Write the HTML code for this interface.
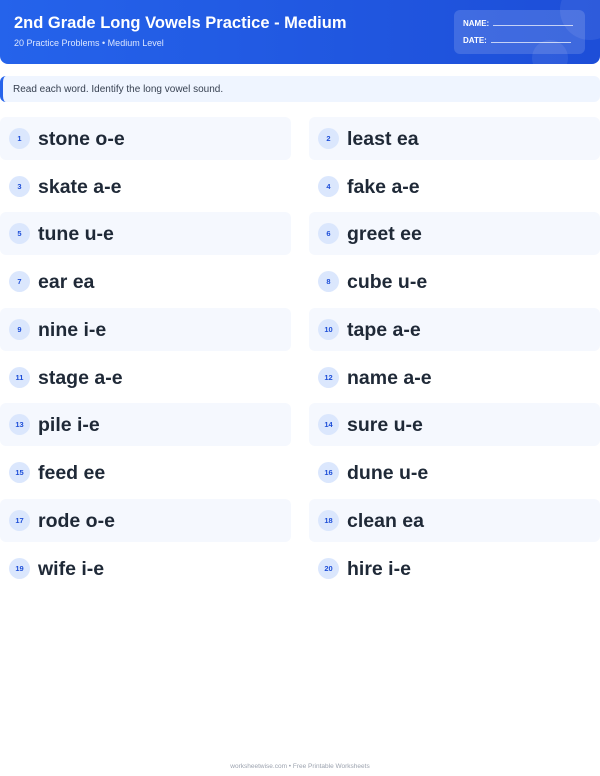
<!DOCTYPE html><html><head><style>
body{margin:0;width:600px;height:776px;background:#fff;font-family:"Liberation Sans",sans-serif;position:relative;overflow:hidden}
.hd{position:absolute;left:0;top:0;width:600px;height:64px;background:linear-gradient(90deg,#2563eb,#1d4ed8);border-radius:0 0 8px 8px;overflow:hidden}
.hd h1{position:absolute;left:14px;top:14px;margin:0;color:#fff;font-size:16.5px;font-weight:bold}
.hd .s{position:absolute;left:14px;top:38px;color:#dbe6ff;font-size:9px}
.nb{position:absolute;left:454px;top:10px;width:131px;height:44px;background:rgba(255,255,255,.15);border-radius:6px;color:#fff;font-size:8px;font-weight:bold}
.nb div{position:absolute;left:9px}
.nb span{display:inline-block;border-bottom:1px solid rgba(255,255,255,.7);width:80px;margin-left:4px}
.c1{position:absolute;left:560px;top:-20px;width:60px;height:60px;border-radius:50%;background:rgba(255,255,255,.08)}
.c2{position:absolute;left:532px;top:40px;width:36px;height:36px;border-radius:50%;background:rgba(255,255,255,.08)}
.ins{position:absolute;left:0;top:76px;width:600px;height:26px;background:#eff5ff;border-left:3px solid #2563eb;border-radius:6px;box-sizing:border-box;font-size:10px;color:#374151;padding:8px 0 0 10px}
.it{position:absolute;width:291px;height:43px;border-radius:6px}
.it.b{background:#f5f8fe}
.n{position:absolute;left:9px;top:11px;width:21px;height:21px;border-radius:50%;background:#dbe7fd;color:#1d4ed8;font-size:7.5px;font-weight:bold;text-align:center;line-height:21px}
.w{position:absolute;left:38px;top:11px;font-size:19.5px;font-weight:bold;color:#1f2937}
.ft{position:absolute;top:763px;width:600px;text-align:center;font-size:6.5px;color:#9ca3af}
</style></head><body>
<div class="hd"><h1>2nd Grade Long Vowels Practice - Medium</h1><div class="s">20 Practice Problems • Medium Level</div>
<div class="c1"></div><div class="c2"></div>
<div class="nb"><div style="top:9px">NAME:<span></span></div><div style="top:26px">DATE:<span></span></div></div></div>
<div class="ins">Read each word. Identify the long vowel sound.</div>
<div class="it b" style="left:0;top:117px"><div class="n">1</div><div class="w">stone o-e</div></div>
<div class="it b" style="left:309px;top:117px"><div class="n">2</div><div class="w">least ea</div></div>
<div class="it" style="left:0;top:165px"><div class="n">3</div><div class="w">skate a-e</div></div>
<div class="it" style="left:309px;top:165px"><div class="n">4</div><div class="w">fake a-e</div></div>
<div class="it b" style="left:0;top:212px"><div class="n">5</div><div class="w">tune u-e</div></div>
<div class="it b" style="left:309px;top:212px"><div class="n">6</div><div class="w">greet ee</div></div>
<div class="it" style="left:0;top:260px"><div class="n">7</div><div class="w">ear ea</div></div>
<div class="it" style="left:309px;top:260px"><div class="n">8</div><div class="w">cube u-e</div></div>
<div class="it b" style="left:0;top:308px"><div class="n">9</div><div class="w">nine i-e</div></div>
<div class="it b" style="left:309px;top:308px"><div class="n">10</div><div class="w">tape a-e</div></div>
<div class="it" style="left:0;top:356px"><div class="n">11</div><div class="w">stage a-e</div></div>
<div class="it" style="left:309px;top:356px"><div class="n">12</div><div class="w">name a-e</div></div>
<div class="it b" style="left:0;top:403px"><div class="n">13</div><div class="w">pile i-e</div></div>
<div class="it b" style="left:309px;top:403px"><div class="n">14</div><div class="w">sure u-e</div></div>
<div class="it" style="left:0;top:451px"><div class="n">15</div><div class="w">feed ee</div></div>
<div class="it" style="left:309px;top:451px"><div class="n">16</div><div class="w">dune u-e</div></div>
<div class="it b" style="left:0;top:499px"><div class="n">17</div><div class="w">rode o-e</div></div>
<div class="it b" style="left:309px;top:499px"><div class="n">18</div><div class="w">clean ea</div></div>
<div class="it" style="left:0;top:547px"><div class="n">19</div><div class="w">wife i-e</div></div>
<div class="it" style="left:309px;top:547px"><div class="n">20</div><div class="w">hire i-e</div></div>
<div class="ft">worksheetwise.com • Free Printable Worksheets</div>
</body></html>
